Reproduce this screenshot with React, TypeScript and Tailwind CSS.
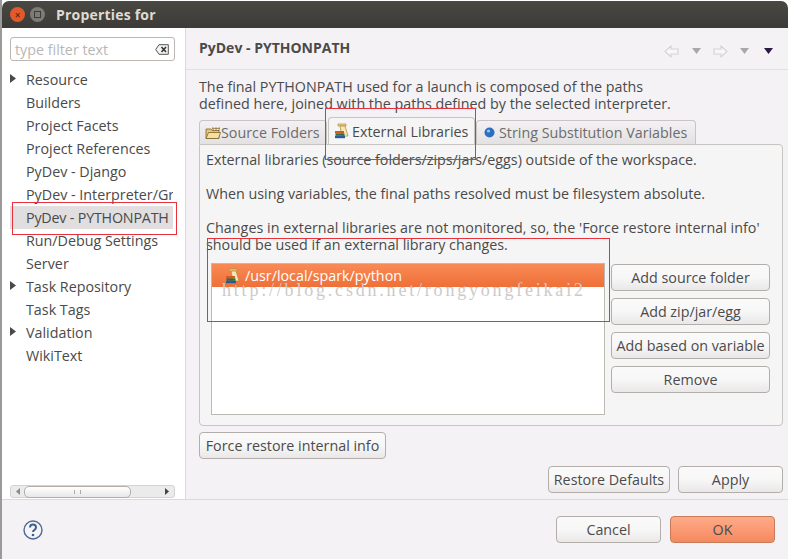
import React from "react";

function Btn({ children, className }: { children: React.ReactNode; className: string }) {
  return (
    <div className={"flex h-[27px] items-center justify-center rounded-[4px] border border-[#b3aeaa] bg-gradient-to-b from-[#fbfafb] via-[#f8f7f8] to-[#e9e7e8] text-[14.3px] text-[#4b4b4b] " + className}>
      {children}
    </div>
  );
}

function LibIcon() {
  return (
    <svg width="16" height="16" viewBox="0 0 16 16" className="shrink-0">
      <path d="M4 1h8v2H4z" fill="#f4d58a" stroke="#b08a3a" strokeWidth="0.7" />
      <path d="M6 3h5l3 10H8z" fill="#f5e9b8" stroke="#b0903c" strokeWidth="0.8" />
      <rect x="1" y="8" width="9" height="2.4" fill="#d9552b" />
      <rect x="1.5" y="10.4" width="9" height="2.4" fill="#2f6f3e" />
      <rect x="1" y="12.8" width="10" height="2.4" fill="#2a5a9c" />
    </svg>
  );
}

function FolderIcon() {
  return (
    <svg width="16" height="14" viewBox="0 0 16 14" className="shrink-0">
      <path d="M1 3h5l1 1.5h7v8H1z" fill="#e8c77a" stroke="#7d6227" strokeWidth="0.8" />
      <path d="M3.5 6.5H15.5L13.5 12.5H1z" fill="#f5e0a3" stroke="#7d6227" strokeWidth="0.8" />
      <path d="M8 1v4M11 1v4M14 1v4M7 2.5h8" stroke="#8a6d2c" strokeWidth="0.7" fill="none" />
    </svg>
  );
}

function Tree({ label, arrow }: { label: string; arrow?: boolean }) {
  return (
    <div className="relative flex h-[23px] items-center whitespace-nowrap pl-[16px]">
      {arrow && (
        <svg width="6" height="9" viewBox="0 0 6 9" className="absolute left-0 top-[6px]">
          <path d="M0 0l6 4.5L0 9z" fill="#4a4a4a" />
        </svg>
      )}
      {label}
    </div>
  );
}

function ArrowIcon({ flip }: { flip?: boolean }) {
  return (
    <svg width="15" height="13" viewBox="0 0 15 13" style={flip ? { transform: "scaleX(-1)" } : undefined}>
      <path d="M1 6.5L7 1v3h7v5H7v3z" fill="#f8f6f8" stroke="#d5d2d0" strokeWidth="1.1" />
    </svg>
  );
}

function Caret({ dark }: { dark?: boolean }) {
  return (
    <svg width="9" height="6" viewBox="0 0 9 6">
      <path d="M0 0h9L4.5 6z" fill={dark ? "#2a1a45" : "#aaa7a8"} />
    </svg>
  );
}

export default function App() {
  return (
    <div className="relative h-[559px] w-[788px] overflow-hidden bg-white pl-[2px] pt-[1px] text-[14.3px] leading-[17px] text-[#4a4a4a] [font-family:'Open_Sans','Noto_Sans',sans-serif]">
      <div className="absolute left-0 top-0 h-full w-[2px] bg-[#9a9a9a]" />
      <div className="flex h-full flex-col">
        {/* title bar */}
        <div className="flex h-[27px] shrink-0 items-center rounded-t-[7px] bg-gradient-to-b from-[#4a4843] to-[#3c3b37] pl-[8px]">
          <div className="flex h-[15px] w-[15px] items-center justify-center rounded-full bg-[#e2592c] text-[10px] leading-none text-[#4a2010]">×</div>
          <div className="ml-[5px] flex h-[15px] w-[15px] items-center justify-center rounded-full bg-[#7d7b76]">
            <div className="h-[7px] w-[7px] border border-[#3c3b37]" />
          </div>
          <div className="ml-[11px] text-[14px] font-bold tracking-[0.2px] text-[#dfdbd2]">Properties for</div>
        </div>

        <div className="flex min-h-0 flex-1">
          {/* sidebar */}
          <div className="flex w-[184px] shrink-0 flex-col border-r border-[#dcd9d8] bg-white pl-[8px] pr-[10px]">
            <div className="mt-[9px] flex h-[24px] items-center justify-between rounded-[3px] border border-[#bdb6b2] pl-[4px] pr-[5px] text-[#b9b7b6]">
              <span>type filter text</span>
              <svg width="14" height="11" viewBox="0 0 14 11">
                <path d="M4 .7h9.3v9.6H4L.7 5.5z" fill="#f3f3f3" stroke="#555" strokeWidth="1" />
                <path d="M6.5 3l4.5 5M11 3L6.5 8" stroke="#333" strokeWidth="1.6" />
              </svg>
            </div>
            <div className="mt-[7px] flex-1 overflow-hidden">
              <div className="pr-[2px]">
                {[
                  ["Resource", true],
                  ["Builders"],
                  ["Project Facets"],
                  ["Project References"],
                  ["PyDev - Django"],
                ].map(([l, a]) => (
                  <Tree key={l as string} label={l as string} arrow={!!a} />
                ))}
                <div className="h-[23px] overflow-hidden whitespace-nowrap pl-[16px] leading-[23px]">PyDev - Interpreter/Grammar</div>
                <div className="flex h-[23px] items-center whitespace-nowrap bg-[#e0dedf] pl-[16px] tracking-[-0.2px]">PyDev - PYTHONPATH</div>
                {[
                  ["Run/Debug Settings"],
                  ["Server"],
                  ["Task Repository", true],
                  ["Task Tags"],
                  ["Validation", true],
                  ["WikiText"],
                ].map(([l, a]) => (
                  <Tree key={l as string} label={l as string} arrow={!!a} />
                ))}
              </div>
            </div>
            <div className="mb-[1px] flex h-[13px] items-center rounded-[3px] border border-[#d5d2d0] bg-[#ecebeb]">
              <svg width="9" height="9" viewBox="0 0 9 9" className="ml-[3px] shrink-0"><path d="M6 1v7L2 4.5z" fill="#8a8a8a" /></svg>
              <div className="ml-[1px] flex h-[12px] w-[107px] items-center justify-center rounded-[5px] border border-[#b5aea8] bg-gradient-to-b from-white to-[#e9e7e7]">
                <div className="h-[4px] w-[7px] border-x border-[#aaa]" />
              </div>
              <div className="flex-1" />
              <svg width="9" height="9" viewBox="0 0 9 9" className="mr-[3px] shrink-0"><path d="M3 1v7l4-3.5z" fill="#444" /></svg>
            </div>
          </div>

          {/* main */}
          <div className="flex min-w-0 flex-1 flex-col bg-[#f5f2f5]">
            <div className="flex h-[42px] shrink-0 items-center justify-between border-b border-[#e3dfdf] pb-[2px] pl-[13px] pr-[15px]">
              <div className="text-[14px] font-bold text-[#4a4a4a]">PyDev - PYTHONPATH</div>
              <div className="mt-[7px] flex items-center">
                <ArrowIcon />
                <div className="ml-[13px] flex"><Caret /></div>
                <div className="ml-[12px] flex"><ArrowIcon flip /></div>
                <div className="ml-[12px] flex"><Caret /></div>
                <div className="ml-[15px] flex"><Caret dark /></div>
              </div>
            </div>
            <div className="pl-[13px] pr-[5px]">
              <div className="mt-[8px]">The final PYTHONPATH used for a launch is composed of the paths</div>
              <div>defined here, joined with the paths defined by the selected interpreter.</div>

              <div className="mt-[5px] flex items-end">
                <div className="flex h-[24px] w-[128px] items-center rounded-t-[4px] border border-b-0 border-[#c8c4c2] bg-gradient-to-b from-[#f3f1f3] to-[#e4e1e3] pl-[5px] text-[#6c6c6c]">
                  <FolderIcon /> Source Folders
                </div>
                <div className="ml-[1px] flex h-[27px] w-[147px] items-center gap-[2px] rounded-t-[4px] border border-b-0 border-[#c8c4c2] bg-[#f6f5f5] pl-[5px]">
                  <LibIcon /> External Libraries
                </div>
                <div className="ml-[1px] flex h-[24px] w-[220px] items-center gap-[4px] rounded-t-[4px] border border-b-0 border-[#c8c4c2] bg-gradient-to-b from-[#f3f1f3] to-[#e4e1e3] pl-[7px] text-[#6c6c6c]">
                  <svg width="11" height="11" viewBox="0 0 11 11"><circle cx="5.5" cy="5.5" r="5" fill="#2a6fc0" /><circle cx="4.5" cy="4" r="1.6" fill="#9cc7ef" /></svg>
                  String Substitution Variables
                </div>
              </div>

              <div className="h-[282px] rounded-b-[4px] rounded-tr-[4px] border border-[#c8c4c2] bg-[#f6f5f5] pl-[6px] pr-[12px] pt-[6px]">
                <div>External libraries (source folders/zips/jars/eggs) outside of the workspace.</div>
                <div className="mt-[17px]">When using variables, the final paths resolved must be filesystem absolute.</div>
                <div className="mt-[17px] whitespace-nowrap tracking-[0.03px]">Changes in external libraries are not monitored, so, the 'Force restore internal info'</div>
                <div>should be used if an external library changes.</div>
                <div className="mt-[10px] flex">
                  <div className="ml-[5px] h-[152px] w-[394px] shrink-0 border border-[#bdb9b5] bg-white">
                    <div className="flex h-[23px] items-center gap-[4px] bg-gradient-to-b from-[#f98a55] to-[#ef6f38] pl-[13px] text-white">
                      <LibIcon /> /usr/local/spark/python
                    </div>
                  </div>
                  <div className="ml-[6px] mt-[1px] flex w-[159px] shrink-0 flex-col gap-[7px]">
                    <Btn className="w-full">Add source folder</Btn>
                    <Btn className="w-full">Add zip/jar/egg</Btn>
                    <Btn className="w-full">Add based on variable</Btn>
                    <Btn className="w-full">Remove</Btn>
                  </div>
                </div>
              </div>

              <Btn className="mt-[6px] w-[187px]">Force restore internal info</Btn>
              <div className="mt-[7px] flex justify-end gap-[8px]">
                <Btn className="w-[122px]">Restore Defaults</Btn>
                <Btn className="w-[105px]">Apply</Btn>
              </div>
            </div>
          </div>
        </div>

        {/* footer */}
        <div className="flex h-[60px] shrink-0 items-center justify-between border-t border-[#dcd9d8] bg-[#f5f2f5] pl-[21px] pr-[13px]">
          <svg width="20" height="20" viewBox="0 0 20 20">
            <circle cx="10" cy="10" r="9" fill="#f5f5f8" stroke="#4d6a94" strokeWidth="1.4" />
            <path d="M7 7.5c0-4 6-4 6 0 0 2.5-3 2.5-3 4.5" fill="none" stroke="#3f5f8c" strokeWidth="2" />
            <circle cx="10" cy="15" r="1.3" fill="#3f5f8c" />
          </svg>
          <div className="flex gap-[9px]">
            <Btn className="w-[105px]">Cancel</Btn>
            <Btn className="w-[105px] border-[#c97a58] from-[#fdaa88] via-[#fb9a74] to-[#f5895f]">OK</Btn>
          </div>
        </div>
      </div>

      {/* watermark */}
      <div className="absolute left-[222px] top-[280px] whitespace-nowrap text-[18px] leading-[20px] text-[#cdcac8] [font-family:'Liberation_Serif',serif]" style={{ letterSpacing: "2.8px" }}>
        http://blog.csdn.net/rongyongfeikai2
      </div>

      {/* red annotation boxes */}
      <div className="absolute left-[12px] top-[202px] h-[33px] w-[165px] border border-[#e8313a]" />
      <div className="absolute left-[325px] top-[108px] h-[52px] w-[151px] border border-[#e8313a]" />
      <div className="absolute left-[207px] top-[238px] h-[84px] w-[403px] border border-[#e8313a]" />
    </div>
  );
}
